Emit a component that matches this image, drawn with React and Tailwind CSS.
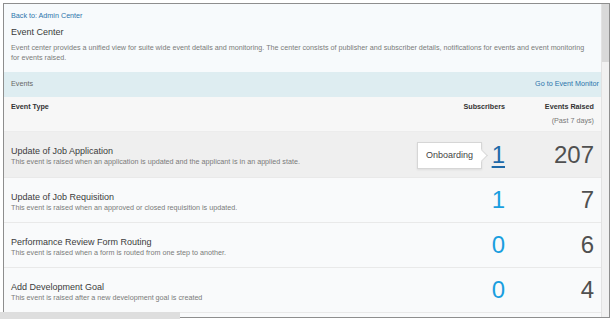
import React from 'react';

const events = [
  {
    title: 'Update of Job Application',
    desc: 'This event is raised when an application is updated and the applicant is in an applied state.',
    subs: 1,
    raised: 207,
    active: true,
  },
  {
    title: 'Update of Job Requisition',
    desc: 'This event is raised when an approved or closed requisition is updated.',
    subs: 1,
    raised: 7,
  },
  {
    title: 'Performance Review Form Routing',
    desc: 'This event is raised when a form is routed from one step to another.',
    subs: 0,
    raised: 6,
  },
  {
    title: 'Add Development Goal',
    desc: 'This event is raised after a new development goal is created',
    subs: 0,
    raised: 4,
  },
];

const Tooltip = ({ text }) => (
  <div className="absolute left-[413px] top-[10px] h-[27px] w-[65px] flex items-center justify-center bg-white border border-[#d6d6d6] shadow-[0_1px_2px_rgba(0,0,0,0.08)] text-[9px] text-[#444]">
    {text}
    <span className="absolute right-[-5px] top-[8px] w-[9px] h-[9px] bg-white border-t border-r border-[#d6d6d6] rotate-45" />
  </div>
);

export default function App() {
  return (
    <div
      className="relative w-[612px] h-[319px] bg-white pt-[3px] pl-[3px] overflow-hidden"
      style={{ fontFamily: '"Liberation Sans", Arial, sans-serif' }}
    >
      <div className="flex w-[607px] h-[315px] border border-[#8e8e8e] bg-[#f9fafb]">
        {/* Content */}
        <div className="w-[597px] flex flex-col overflow-hidden">
          {/* Header */}
          <div className="h-[68px] shrink-0 bg-[#f7fafc] pt-[7px] px-[7px]">
            <a className="block text-[7.2px] leading-[10px] text-[#2b74ab]">Back to: Admin Center</a>
            <h1 className="mt-[5px] text-[9px] leading-[12px] text-[#3a3a3a]">Event Center</h1>
            <p className="mt-[5px] text-[7.2px] leading-[10px] text-[#7a7a7a] whitespace-nowrap">
              Event center provides a unified view for suite wide event details and monitoring. The center consists of publisher and subscriber details, notifications for events and event monitoring
              <br />
              for events raised.
            </p>
          </div>

          {/* Events bar */}
          <div className="h-[25px] shrink-0 flex items-center justify-between bg-[#deedf1] pl-[7px] pr-[2px] text-[7.2px]">
            <span className="text-[#666]">Events</span>
            <a className="text-[#2b74ab]">Go to Event Monitor</a>
          </div>

          {/* Column headings */}
          <div className="h-[35px] shrink-0 grid grid-cols-[1fr_89px_92px] bg-[#f7f7f7] border-b border-[#ececec] pt-[3px] text-[7.2px] leading-[14px] font-bold text-[#333]">
            <div className="pl-[7px]">Event Type</div>
            <div className="text-right pr-[4px]">Subscribers</div>
            <div className="text-right pr-[7px]">
              Events Raised
              <div className="font-normal text-[#777]">(Past 7 days)</div>
            </div>
          </div>

          {/* Rows */}
          {events.map((e) => (
            <div
              key={e.title}
              className={`relative shrink-0 grid grid-cols-[1fr_89px_92px] border-b border-[#e9e9e9] ${
                e.active ? 'h-[46px] bg-[#efefef]' : 'h-[45px] bg-[#f9fafb]'
              }`}
            >
              <div className="pl-[7px] pt-[13px]">
                <div className="text-[9px] leading-[12px] text-[#3b3b3b]">{e.title}</div>
                <div className="text-[7.2px] leading-[10px] text-[#7a7a7a] whitespace-nowrap">{e.desc}</div>
              </div>
              <div className="flex items-center justify-end pr-[4px]">
                <span
                  className={`text-[24px] leading-none ${
                    e.active ? 'text-[#1f6aa8] underline decoration-[2px] underline-offset-[3px]' : 'text-[#1a9edf]'
                  }`}
                >
                  {e.subs}
                </span>
              </div>
              <div className="flex items-center justify-end pr-[7px]">
                <span className="text-[24px] leading-none text-[#505050]">{e.raised}</span>
              </div>
              {e.active && <Tooltip text="Onboarding" />}
            </div>
          ))}
        </div>

        {/* Vertical scrollbar */}
        <div className="w-[8px] bg-[#f1f1f1] border-l border-[#e2e2e2]">
          <div className="h-[58px] bg-[#d9d9d9]" />
        </div>
      </div>

      {/* Horizontal scrollbar */}
      <div className="absolute left-0 bottom-0 w-[180px] h-[7px] bg-[#dedede]" />
    </div>
  );
}
